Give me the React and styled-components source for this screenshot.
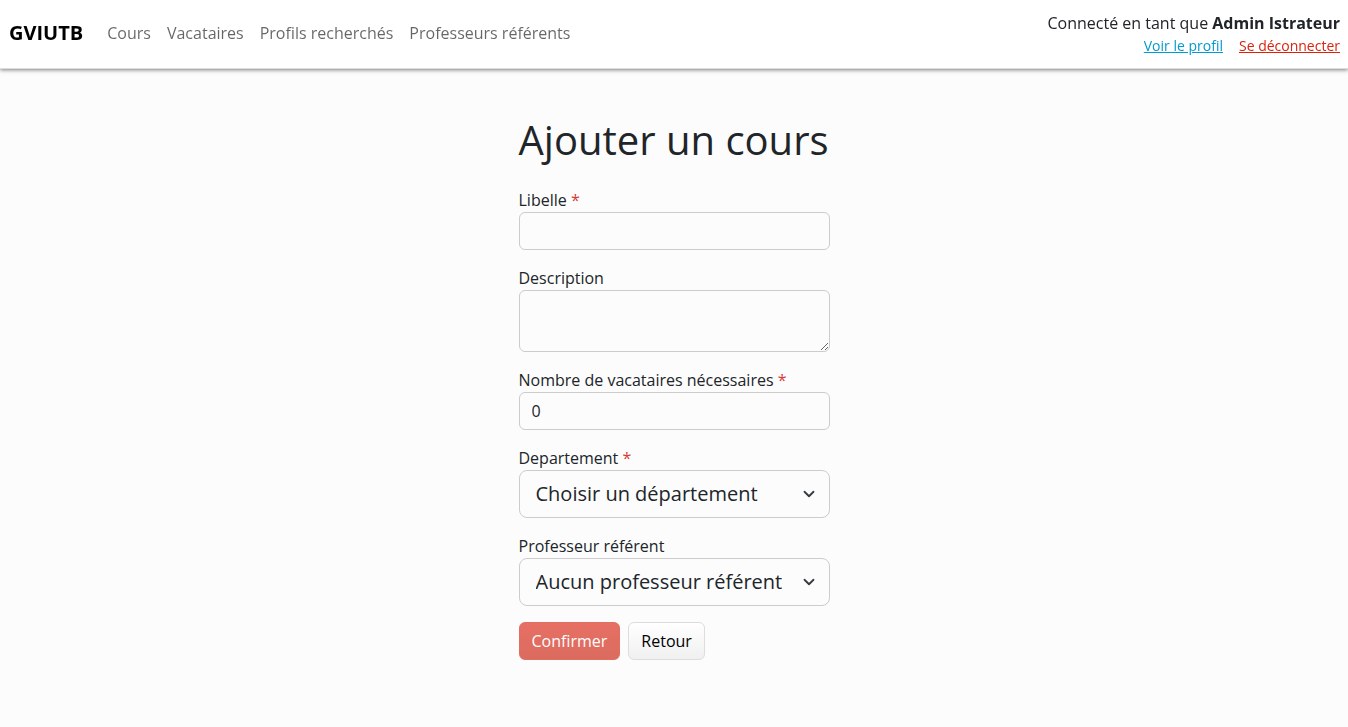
import React from "react";
import styled, { createGlobalStyle, css } from "styled-components";

const GlobalStyle = createGlobalStyle`
  *, *::before, *::after { box-sizing: border-box; }
  body {
    margin: 0;
    background: #fcfcfc;
    color: #212529;
    font-family: "Open Sans", sans-serif;
    font-size: 16px;
    line-height: 24px;
  }
`;

const Header = styled.header`
  display: flex;
  align-items: center;
  justify-content: space-between;
  min-height: 69px;
  padding: 8px 8px 10px 9px;
  border-bottom: 1px solid #ddd;
  background: #fff;
  box-shadow: 0 1px 4px rgba(0, 0, 0, 0.5);
  will-change: transform;
`;

const Nav = styled.nav`
  display: flex;
  align-items: center;
`;

const Brand = styled.a`
  margin-right: 16px;
  color: #000;
  font-size: 20px;
  font-weight: 700;
  text-decoration: none;
`;

const NavLink = styled.a`
  padding: 8px;
  color: rgba(0, 0, 0, 0.6);
  text-decoration: none;
`;

const Account = styled.div`
  text-align: right;
`;

const AccountLinks = styled.div`
  display: flex;
  justify-content: flex-end;
  gap: 16px;
  font-size: 14px;
  line-height: 21px;
`;

const AccountLink = styled.a`
  color: ${(p) => (p.$danger ? "#d9230f" : "#029acf")};
`;

const Main = styled.main`
  display: flex;
  flex-direction: column;
  width: fit-content;
  margin: 47px auto 48px;
`;

const Title = styled.h1`
  margin: 0 0 24px;
  font-size: 40px;
  font-weight: 400;
  line-height: 48px;
`;

const Form = styled.form`
  display: flex;
  flex-direction: column;
  gap: 16px;
`;

const FieldGroup = styled.div`
  display: flex;
  flex-direction: column;
`;

const Required = styled.span`
  color: #d93a35;
`;

const control = css`
  display: block;
  width: 100%;
  margin: 0;
  border: 1px solid #ccc;
  border-radius: 6px;
  background: transparent;
  color: #212529;
  font: inherit;
`;

const Input = styled.input`
  ${control}
  height: 38px;
  padding: 6px 12px;
  appearance: textfield;
`;

const TextArea = styled.textarea`
  ${control}
  height: 62px;
  padding: 6px 12px;
  resize: vertical;
`;

const SelectBox = styled.div`
  display: grid;
  align-items: center;
  > * { grid-area: 1 / 1; }
  > svg {
    justify-self: end;
    width: 12px;
    height: 12px;
    margin-right: 15px;
    pointer-events: none;
  }
`;

const Select = styled.select`
  ${control}
  height: 48px;
  padding: 8px 46px 8px 16px;
  border-radius: 8px;
  font-size: 20px;
  line-height: 30px;
  appearance: none;
`;

const Actions = styled.div`
  display: flex;
  gap: 8px;
`;

const Button = styled.button`
  height: 38px;
  padding: 6px 12px;
  border: 1px solid #ddd;
  border-radius: 6px;
  background: linear-gradient(#fff, #f0f0f0);
  color: #000;
  font: inherit;
  ${(p) =>
    p.$primary &&
    css`
      border-color: #d02312;
      background: linear-gradient(#dd2514, #cb1f0c);
      color: #fff;
    `}
  &:disabled { opacity: 0.65; }
`;

const NAV_ITEMS = ["Cours", "Vacataires", "Profils recherchés", "Professeurs référents"];

function Field({ id, label, required, children }) {
  return (
    <FieldGroup>
      <label htmlFor={id}>
        {label}
        {required && <Required> *</Required>}
      </label>
      {children}
    </FieldGroup>
  );
}

function SelectField({ id, placeholder }) {
  return (
    <SelectBox>
      <Select id={id} defaultValue="">
        <option value="">{placeholder}</option>
      </Select>
      <svg viewBox="0 0 16 16" fill="none" stroke="#343a40" strokeWidth="2.4" strokeLinecap="round" strokeLinejoin="round" aria-hidden="true">
        <path d="m2 5 6 6 6-6" />
      </svg>
    </SelectBox>
  );
}

export default function App() {
  return (
    <>
      <GlobalStyle />
      <Header>
        <Nav>
          <Brand href="#">GVIUTB</Brand>
          {NAV_ITEMS.map((item) => (
            <NavLink href="#" key={item}>{item}</NavLink>
          ))}
        </Nav>
        <Account>
          <div>Connecté en tant que <strong>Admin Istrateur</strong></div>
          <AccountLinks>
            <AccountLink href="#">Voir le profil</AccountLink>
            <AccountLink href="#" $danger>Se déconnecter</AccountLink>
          </AccountLinks>
        </Account>
      </Header>
      <Main>
        <Title>Ajouter un cours</Title>
        <Form>
          <Field id="libelle" label="Libelle" required>
            <Input id="libelle" type="text" />
          </Field>
          <Field id="description" label="Description">
            <TextArea id="description" />
          </Field>
          <Field id="vacataires" label="Nombre de vacataires nécessaires" required>
            <Input id="vacataires" type="number" defaultValue="0" />
          </Field>
          <Field id="departement" label="Departement" required>
            <SelectField id="departement" placeholder="Choisir un département" />
          </Field>
          <Field id="referent" label="Professeur référent">
            <SelectField id="referent" placeholder="Aucun professeur référent" />
          </Field>
          <Actions>
            <Button type="submit" $primary disabled>Confirmer</Button>
            <Button type="button">Retour</Button>
          </Actions>
        </Form>
      </Main>
    </>
  );
}
